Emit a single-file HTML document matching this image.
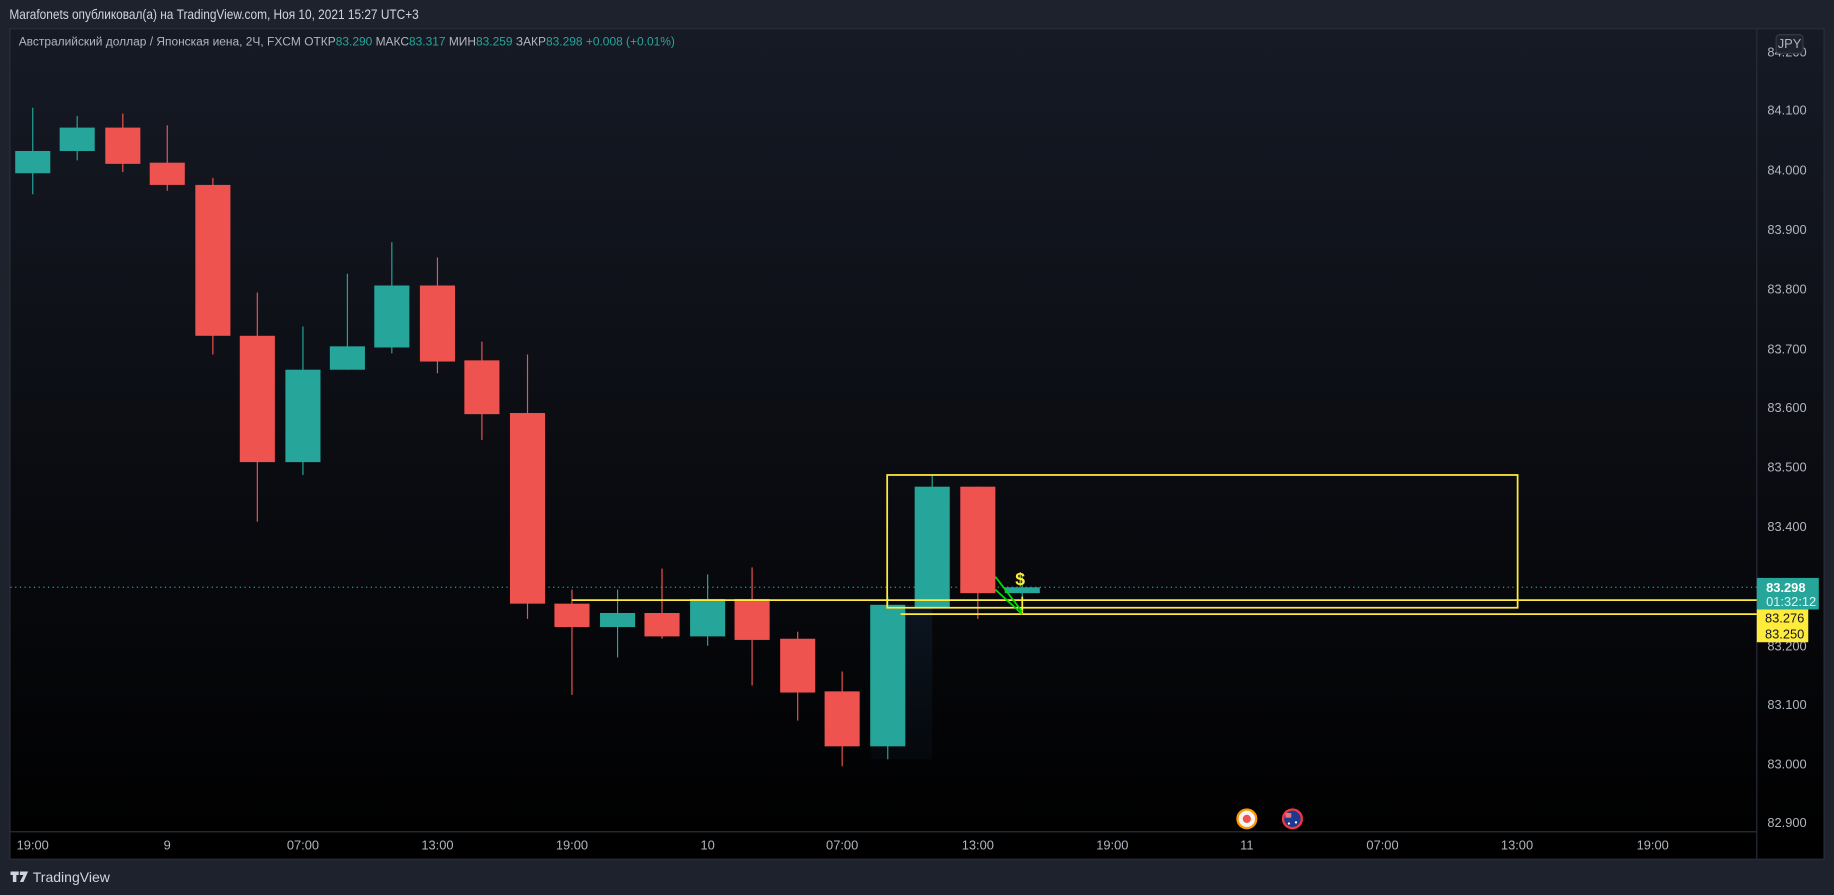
<!DOCTYPE html>
<html><head><meta charset="utf-8"><style>
html,body{margin:0;padding:0;background:#1e222d;overflow:hidden}
svg{display:block}
text{font-family:"Liberation Sans","DejaVu Sans",sans-serif}
</style></head><body>
<svg width="1834" height="895" viewBox="0 0 1568 765" xmlns="http://www.w3.org/2000/svg">
<defs>
<linearGradient id="bg" x1="0" y1="0" x2="0" y2="1">
<stop offset="0" stop-color="#161a25"/><stop offset="1" stop-color="#000"/>
</linearGradient>
<linearGradient id="hl" x1="0" y1="0" x2="0" y2="1">
<stop offset="0" stop-color="#0c1520"/><stop offset="1" stop-color="#05080c"/>
</linearGradient>
</defs>
<rect width="1568" height="765" fill="#1e222d"/>
<text x="8" y="16" fill="#d1d4dc" font-size="11.5" textLength="350" lengthAdjust="spacingAndGlyphs">Marafonets опубликовал(а) на TradingView.com, Ноя 10, 2021 15:27 UTC+3</text>
<rect x="8.5" y="24.5" width="1551" height="710" fill="url(#bg)" stroke="#2a2e39"/>
<line x1="1502" y1="25" x2="1502" y2="734" stroke="#2a2e39"/>
<line x1="9" y1="711" x2="1502" y2="711" stroke="#2a2e39"/>
<text x="16" y="39" font-size="10.5" fill="#b2b5be" textLength="561" lengthAdjust="spacingAndGlyphs">Австралийский доллар / Японская иена, 2Ч, FXCM  ОТКР<tspan fill="#26a69a">83.290</tspan>  МАКС<tspan fill="#26a69a">83.317</tspan>  МИН<tspan fill="#26a69a">83.259</tspan>  ЗАКР<tspan fill="#26a69a">83.298</tspan>  <tspan fill="#26a69a">+0.008 (+0.01%)</tspan></text>
<rect x="745" y="517" width="52" height="132" fill="url(#hl)"/>
<line x1="9" y1="502" x2="1502" y2="502" stroke="#26a69a" stroke-dasharray="1 3" stroke-width="1"/>
<g stroke-width="1">
<g fill="#26a69a" stroke="#26a69a">
<line x1="28" y1="92" x2="28" y2="166"/><rect x="13" y="129" width="30" height="19" stroke="none"/>
<line x1="66" y1="99" x2="66" y2="137"/><rect x="51" y="109" width="30" height="20" stroke="none"/>
<line x1="259" y1="279" x2="259" y2="406"/><rect x="244" y="316" width="30" height="79" stroke="none"/>
<line x1="297" y1="234" x2="297" y2="316"/><rect x="282" y="296" width="30" height="20" stroke="none"/>
<line x1="335" y1="207" x2="335" y2="302"/><rect x="320" y="244" width="30" height="53" stroke="none"/>
<line x1="528" y1="504" x2="528" y2="562"/><rect x="513" y="524" width="30" height="12" stroke="none"/>
<line x1="605" y1="491" x2="605" y2="552"/><rect x="590" y="512" width="30" height="32" stroke="none"/>
<line x1="759" y1="510" x2="759" y2="649"/><rect x="744" y="517" width="30" height="121" stroke="none"/>
<line x1="797" y1="406" x2="797" y2="520"/><rect x="782" y="416" width="30" height="104" stroke="none"/>
<line x1="874" y1="490" x2="874" y2="524"/><rect x="859" y="502" width="30" height="5" stroke="none"/>
</g>
<g fill="#ef5350" stroke="#ef5350">
<line x1="105" y1="97" x2="105" y2="147"/><rect x="90" y="109" width="30" height="31" stroke="none"/>
<line x1="143" y1="107" x2="143" y2="163"/><rect x="128" y="139" width="30" height="19" stroke="none"/>
<line x1="182" y1="152" x2="182" y2="303"/><rect x="167" y="158" width="30" height="129" stroke="none"/>
<line x1="220" y1="250" x2="220" y2="446"/><rect x="205" y="287" width="30" height="108" stroke="none"/>
<line x1="374" y1="220" x2="374" y2="319"/><rect x="359" y="244" width="30" height="65" stroke="none"/>
<line x1="412" y1="292" x2="412" y2="376"/><rect x="397" y="308" width="30" height="46" stroke="none"/>
<line x1="451" y1="303" x2="451" y2="529"/><rect x="436" y="353" width="30" height="163" stroke="none"/>
<line x1="489" y1="504" x2="489" y2="594"/><rect x="474" y="516" width="30" height="20" stroke="none"/>
<line x1="566" y1="486" x2="566" y2="546"/><rect x="551" y="524" width="30" height="20" stroke="none"/>
<line x1="643" y1="485" x2="643" y2="586"/><rect x="628" y="512" width="30" height="35" stroke="none"/>
<line x1="682" y1="540" x2="682" y2="616"/><rect x="667" y="546" width="30" height="46" stroke="none"/>
<line x1="720" y1="574" x2="720" y2="655"/><rect x="705" y="591" width="30" height="47" stroke="none"/>
<line x1="836" y1="416" x2="836" y2="529"/><rect x="821" y="416" width="30" height="91" stroke="none"/>
</g>
</g>
<g stroke="#ffeb3b" stroke-width="1.5" fill="none">
<rect x="758.5" y="406" width="539" height="113.5"/>
<line x1="489" y1="513" x2="1502" y2="513"/>
<line x1="770" y1="525" x2="1502" y2="525"/>
<line x1="874" y1="510" x2="874" y2="525"/>
</g>
<g stroke="#00e000" stroke-width="1.5">
<line x1="851" y1="493" x2="874" y2="523"/>
<line x1="851" y1="504" x2="874" y2="525"/>
</g>
<text x="868" y="500" fill="#ffeb3b" font-size="15" font-weight="bold">$</text>
<g fill="#b2b5be" font-size="11">
<text x="1511" y="48">84.200</text><text x="1511" y="98">84.100</text><text x="1511" y="149">84.000</text>
<text x="1511" y="200">83.900</text><text x="1511" y="251">83.800</text><text x="1511" y="302">83.700</text>
<text x="1511" y="352">83.600</text><text x="1511" y="403">83.500</text><text x="1511" y="454">83.400</text>
<text x="1511" y="556">83.200</text><text x="1511" y="606">83.100</text>
<text x="1511" y="657">83.000</text><text x="1511" y="707">82.900</text>
</g>
<rect x="1518.5" y="29.5" width="23" height="16" rx="3" fill="#1e222d" stroke="#363a45"/>
<text x="1530" y="41" fill="#b2b5be" font-size="11" text-anchor="middle">JPY</text>
<rect x="1502" y="494" width="53" height="27" fill="#26a69a"/>
<text x="1510" y="506" fill="#fff" font-size="11" font-weight="bold">83.298</text>
<text x="1510" y="518" fill="#e0f2f1" font-size="11">01:32:12</text>
<rect x="1502" y="521" width="44" height="28" fill="#ffeb3b"/>
<text x="1509" y="532" fill="#131722" font-size="11">83.276</text>
<text x="1509" y="546" fill="#131722" font-size="11">83.250</text>
<g fill="#b2b5be" font-size="11" text-anchor="middle">
<text x="28" y="726">19:00</text><text x="143" y="726">9</text><text x="259" y="726">07:00</text>
<text x="374" y="726">13:00</text><text x="489" y="726">19:00</text><text x="605" y="726">10</text>
<text x="720" y="726">07:00</text><text x="836" y="726">13:00</text><text x="951" y="726">19:00</text>
<text x="1066" y="726">11</text><text x="1182" y="726">07:00</text><text x="1297" y="726">13:00</text>
<text x="1413" y="726">19:00</text>
</g>
<circle cx="1066" cy="700" r="8" fill="#f5f5f5" stroke="#ff9800" stroke-width="2"/>
<circle cx="1066" cy="700" r="3.5" fill="#ef5350"/>
<circle cx="1105" cy="700" r="8" fill="#1a3a8f" stroke="#f23645" stroke-width="2"/>
<rect x="1099" y="695" width="5" height="4" fill="#e57373"/>
<circle cx="1108" cy="703" r="1" fill="#fff"/><circle cx="1102" cy="704" r="1" fill="#fff"/>
<g fill="#d1d4dc">
<path d="M9 745h7v3h-2v6h-3v-6h-2z"/>
<path d="M17 745h7l-4 9h-3l3-6h-3z"/>
</g>
<text x="28" y="754" fill="#d1d4dc" font-size="12">TradingView</text>
</svg>
</body></html>
